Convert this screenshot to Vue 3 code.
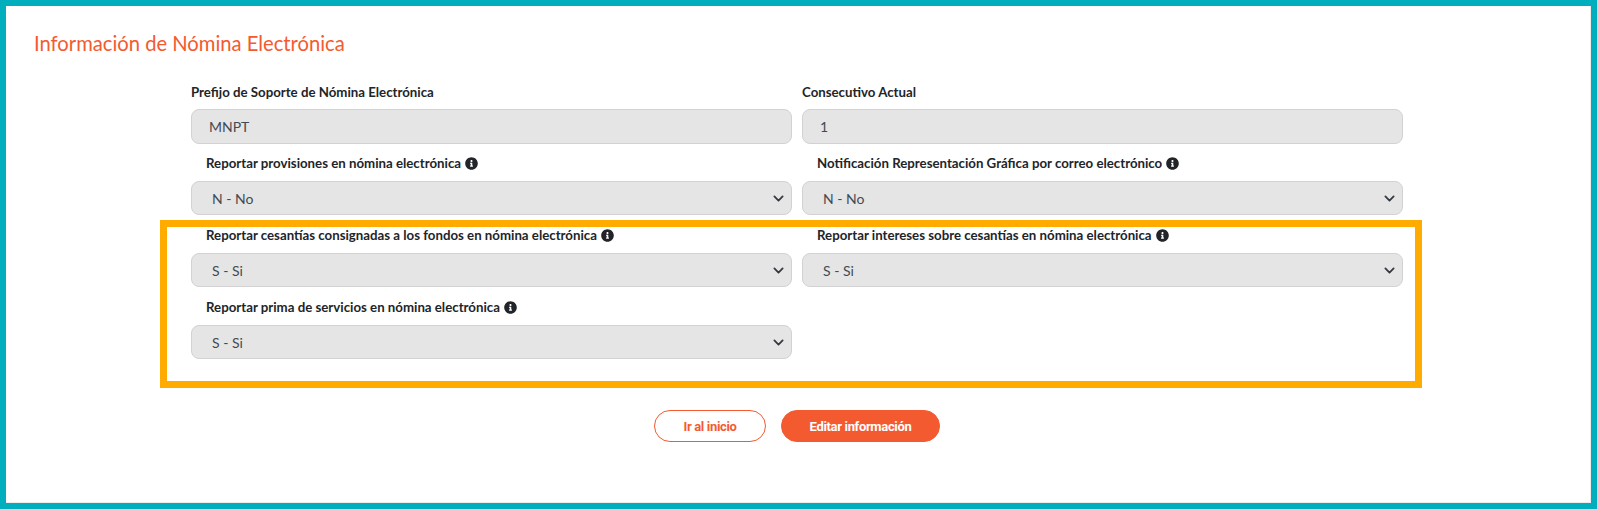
<script setup>
const inputs = [
  { label: "Prefijo de Soporte de Nómina Electrónica", value: "MNPT" },
  { label: "Consecutivo Actual", value: "1" },
];
const selects = [
  { label: "Reportar provisiones en nómina electrónica", value: "N - No" },
  { label: "Notificación Representación Gráfica por correo electrónico", value: "N - No" },
  { label: "Reportar cesantías consignadas a los fondos en nómina electrónica", value: "S - Si" },
  { label: "Reportar intereses sobre cesantías en nómina electrónica", value: "S - Si" },
  { label: "Reportar prima de servicios en nómina electrónica", value: "S - Si" },
];
</script>

<template>
  <div class="frame">
    <h2 class="title">Información de Nómina Electrónica</h2>

    <div class="form">
      <div class="grid">
        <div v-for="f in inputs" :key="f.label" class="field">
          <label class="label label-top">{{ f.label }}</label>
          <input class="control input" :value="f.value" readonly />
        </div>
        <div v-for="s in selects" :key="s.label" class="field">
          <label class="label">
            {{ s.label }}
            <svg class="info" viewBox="0 0 512 512"><path d="M256 8C119 8 8 119 8 256s111 248 248 248 248-111 248-248S393 8 256 8zm0 110c23.200 0 42 18.800 42 42s-18.800 42-42 42-42-18.800-42-42 18.800-42 42-42zm56 254c0 6.600-5.400 12-12 12h-88c-6.600 0-12-5.400-12-12v-24c0-6.600 5.400-12 12-12h12v-64h-12c-6.600 0-12-5.400-12-12v-24c0-6.600 5.400-12 12-12h64c6.600 0 12 5.400 12 12v100h12c6.600 0 12 5.400 12 12v24z" /></svg>
          </label>
          <div class="select-wrap">
            <select class="control select"><option>{{ s.value }}</option></select>
            <svg class="chevron" viewBox="0 0 16 16"><path d="M2 5l6 6 6-6" /></svg>
          </div>
        </div>
      </div>

      <!-- recuadro de resaltado encima del formulario -->
      <div class="marker"></div>

      <div class="actions">
        <button class="btn btn-outline">Ir al inicio</button>
        <button class="btn btn-solid">Editar información</button>
      </div>
    </div>
  </div>
</template>

<style scoped>
.frame {
  box-sizing: border-box;
  width: 1597px;
  height: 509px;
  border: 6px solid #00aebd;
  background: #fff;
  box-shadow: inset -1px -1px 0 #ececec;
  padding: 21px 28px 0;
  font-family: Lato, "Liberation Sans", sans-serif;
  overflow: hidden;
}

.title {
  margin: 0;
  font-size: 20.2px;
  line-height: 32px;
  font-weight: 400;
  color: #f45a30;
}

.form {
  position: relative;
  width: 1212px;
  margin: 14px 0 0 157px;
}

.grid {
  display: grid;
  grid-template-columns: 601px 601px;
  column-gap: 10px;
}

.field {
  min-width: 0;
}

.label {
  display: flex;
  align-items: center;
  gap: 4px;
  height: 38px;
  padding: 2px 0 0 15px;
  font-size: 13.25px;
  font-weight: 700;
  color: #212529;
  box-sizing: border-box;
  white-space: nowrap;
}

.label-top {
  height: 36px;
  padding-left: 0;
}

.control {
  display: block;
  box-sizing: border-box;
  width: 100%;
  height: 34px;
  border: 1px solid #d2d2d2;
  border-radius: 8px;
  background: #e5e5e5;
  color: #434a52;
  font-family: Lato, "Liberation Sans", sans-serif;
  font-size: 14px;
  outline: none;
}

.input {
  height: 35px;
  margin-bottom: -1px;
  padding: 0 20px 0 17px;
}

.select {
  appearance: none;
  padding: 0 20px 0 20px;
}

.select-wrap {
  position: relative;
}

.chevron {
  position: absolute;
  right: 8px;
  top: 11.500px;
  width: 11px;
  height: 11px;
  fill: none;
  stroke: #343a40;
  stroke-width: 2.6;
  stroke-linecap: round;
  stroke-linejoin: round;
}

.info {
  width: 13px;
  height: 13px;
  fill: #212529;
  flex: none;
}

.marker {
  position: absolute;
  top: 147px;
  left: -31px;
  right: -19px;
  height: 168px;
  box-sizing: border-box;
  border: 7px solid #ffab00;
  pointer-events: none;
}

.actions {
  display: flex;
  justify-content: center;
  gap: 15px;
  margin-top: 51px;
}

.btn {
  height: 32px;
  border-radius: 16px;
  font-family: Roboto, "Liberation Sans", sans-serif;
  font-size: 13px;
  font-weight: 700;
  letter-spacing: -0.33px;
  cursor: pointer;
}

.btn-outline {
  width: 112px;
  background: #fff;
  border: 1px solid #f45a30;
  color: #f45a30;
}

.btn-solid {
  width: 159px;
  background: #f45a30;
  border: 1px solid #f45a30;
  color: #fff;
}
</style>
